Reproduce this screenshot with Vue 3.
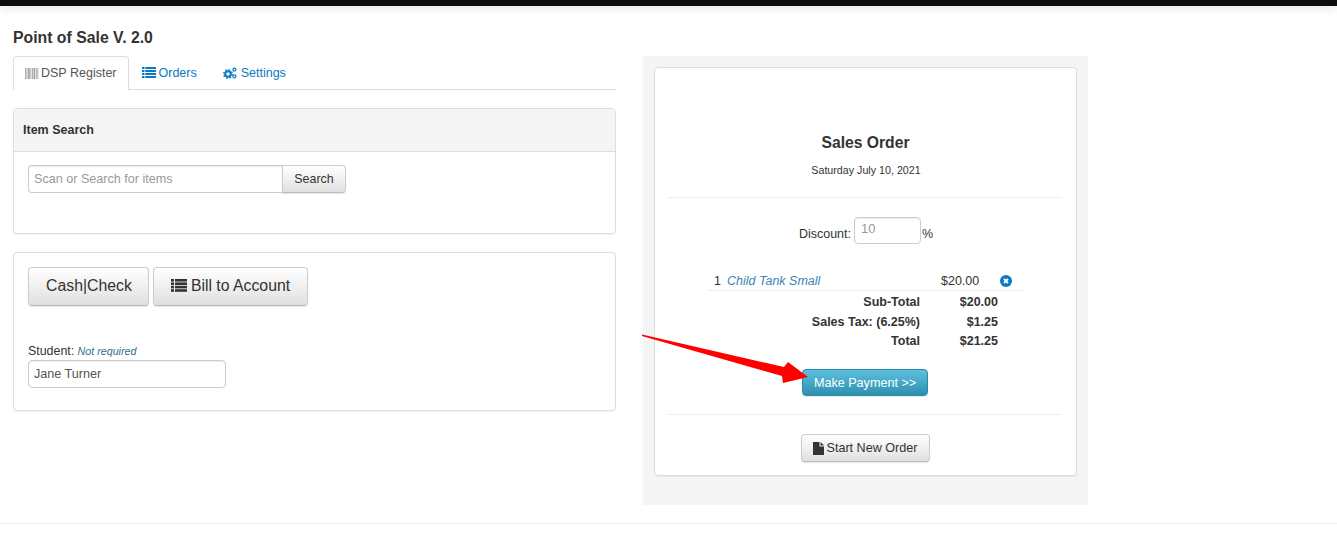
<script setup>
const tabs = [
  { label: 'DSP Register', icon: 'barcode', active: true },
  { label: 'Orders', icon: 'list', active: false },
  { label: 'Settings', icon: 'cogs', active: false }
]
const barcodeBars = [
  [0, 1], [2, 1], [4, 2], [7, 1], [9, 1], [11, 2], [14, 1], [16, 1]
]
const listRows = [1, 4, 7, 10]
</script>

<template>
  <div class="page">
    <div class="topbar"></div>
    <main class="content">
      <section class="left">
        <h1 class="title">Point of Sale V. 2.0</h1>
        <nav class="tabs">
          <a v-for="t in tabs" :key="t.label" class="tab" :class="[t.icon, { active: t.active }]">
            <svg v-if="t.icon === 'barcode'" class="ico-barcode" viewBox="0 0 14 11" width="14" height="11">
              <rect v-for="b in barcodeBars" :key="b[0]" :x="b[0] * 0.78" y="0" :width="b[1] * 0.78" height="11" fill="#999" />
            </svg>
            <svg v-else-if="t.icon === 'list'" class="ico" viewBox="0 0 14 12" width="14" height="12">
              <g v-for="y in listRows" :key="y" fill="#0a7ac2">
                <rect x="0" :y="y - 1" width="2.4" height="2" />
                <rect x="3.2" :y="y - 1" width="10.8" height="2" />
              </g>
            </svg>
            <svg v-else class="ico" viewBox="0 0 14 12" width="14" height="12">
              <circle cx="5" cy="7" r="2.8" fill="none" stroke="#0a7ac2" stroke-width="2" />
              <circle cx="5" cy="7" r="4.3" fill="none" stroke="#0a7ac2" stroke-width="1.4" stroke-dasharray="1.7 1.68" />
              <circle cx="11.4" cy="2.6" r="1.5" fill="none" stroke="#0a7ac2" stroke-width="1.2" />
              <circle cx="11.4" cy="9.4" r="1.5" fill="none" stroke="#0a7ac2" stroke-width="1.2" />
            </svg>
            {{ t.label }}
          </a>
        </nav>

        <div class="panel search-panel">
          <div class="panel-heading">Item Search</div>
          <div class="panel-body">
            <div class="input-group">
              <input class="field search-field" placeholder="Scan or Search for items" />
              <button class="btn search-btn">Search</button>
            </div>
          </div>
        </div>

        <div class="panel pay-panel">
          <div class="big-buttons">
            <button class="btn big cash">Cash|Check</button>
            <button class="btn big bill">
              <svg viewBox="0 0 16 13" width="16" height="13">
                <g v-for="y in [0, 3.4, 6.8, 10.2]" :key="y" fill="#333">
                  <rect x="0" :y="y" width="3" height="2.6" />
                  <rect x="4" :y="y" width="12" height="2.6" />
                </g>
              </svg>
              Bill to Account
            </button>
          </div>
          <div class="student">
            <label class="student-label">Student: <em>Not required</em></label>
            <input class="field student-field" value="Jane Turner" />
          </div>
        </div>
      </section>

      <aside class="well">
        <div class="card">
          <h2 class="order-title">Sales Order</h2>
          <p class="order-date">Saturday July 10, 2021</p>
          <hr class="rule first-rule" />
          <div class="discount">
            <span class="discount-text">Discount:</span>
            <input class="field discount-field" placeholder="10" />
            <span class="discount-text">%</span>
          </div>
          <div class="lines">
            <div class="line-item">
              <span class="qty">1</span>
              <a class="item-name">Child Tank Small</a>
              <span class="price">$20.00</span>
              <svg class="remove" viewBox="0 0 12 12" width="12" height="12">
                <circle cx="6" cy="6" r="6" fill="#0a7ac2" />
                <path d="M4 4l4 4M8 4l-4 4" stroke="#fff" stroke-width="1.8" />
              </svg>
            </div>
            <div class="total-row"><span>Sub-Total</span><span>$20.00</span></div>
            <div class="total-row"><span>Sales Tax: (6.25%)</span><span>$1.25</span></div>
            <div class="total-row"><span>Total</span><span>$21.25</span></div>
          </div>
          <div class="center pay-wrap">
            <button class="btn info">Make Payment &gt;&gt;</button>
          </div>
          <hr class="rule" />
          <div class="center new-wrap">
            <button class="btn new-order">
              <svg viewBox="0 0 11 13" width="11" height="13">
                <path d="M0 0h6.5v4.5H11V13H0zM7.6 0L11 3.4H7.6z" fill="#333" />
              </svg>
              Start New Order
            </button>
          </div>
        </div>
      </aside>
    </main>
    <footer class="footer-line"></footer>
    <svg class="arrow" viewBox="0 0 180 60" width="180" height="60">
      <path d="M1 0.5 L143 33 L147 28 L167 43 L142 49 L141 42 L1 2 Z" fill="#ff0000" />
    </svg>
  </div>
</template>

<style>
html, body { margin: 0; background: #fff; }
</style>

<style scoped>
.page {
  position: relative;
  width: 1337px;
  height: 537px;
  overflow: hidden;
  font-family: "Liberation Sans", Arial, sans-serif;
  font-size: 14px;
  line-height: 20px;
  color: #333;
}
.topbar {
  height: 6px;
  background: #0d0d0d;
  box-shadow: 0 2px 8px rgba(0, 0, 0, 0.12);
}
.content {
  display: flex;
  align-items: flex-start;
  gap: 27px;
  padding: 0 13px;
}
.left { width: 603px; }
.title {
  margin: 21px 0 8px;
  font-size: 15.8px;
  line-height: 21px;
  font-weight: 700;
}
.tabs {
  display: flex;
  height: 33px;
  box-sizing: content-box;
  border-bottom: 1px solid #ddd;
  margin-bottom: 18px;
  font-size: 12.5px;
}
.tab {
  display: flex;
  align-items: center;
  gap: 3px;
  box-sizing: border-box;
  height: 33px;
  padding: 0 12px;
  color: #0a7ac2;
  border: 1px solid transparent;
  border-bottom: 0;
  border-radius: 4px 4px 0 0;
}
.tab.active {
  height: 34px;
  gap: 2px;
  color: #555;
  background: #fff;
  border-color: #ddd;
  margin-bottom: -1px;
  padding: 0 11px 1px;
}
.tab.cogs { gap: 4px; }
.panel {
  background: #fff;
  border: 1px solid #ddd;
  border-radius: 4px;
  box-shadow: 0 1px 1px rgba(0, 0, 0, 0.05);
}
.search-panel { height: 124px; margin-bottom: 18px; }
.panel-heading {
  height: 42px;
  line-height: 42px;
  padding: 0 9px;
  font-size: 12.5px;
  font-weight: 700;
  background: #f5f5f5;
  border-bottom: 1px solid #ddd;
  border-radius: 3px 3px 0 0;
}
.panel-body { padding: 13px 14px; }
.input-group { display: flex; }
.field {
  box-sizing: border-box;
  font-family: inherit;
  font-size: 12.6px;
  color: #555;
  background: #fff;
  border: 1px solid #ccc;
  border-radius: 4px;
  padding: 0 5px;
  outline: none;
  box-shadow: inset 0 1px 1px rgba(0, 0, 0, 0.075);
}
.field::placeholder { color: #999; opacity: 1; }
.search-field {
  width: 254px;
  height: 28px;
  border-radius: 4px 0 0 4px;
  border-right: 0;
}
.btn {
  font-family: inherit;
  color: #333;
  background: linear-gradient(to bottom, #fff, #e0e0e0);
  border: 1px solid #ccc;
  border-bottom-color: #bbb;
  border-radius: 4px;
  box-shadow: 0 1px 1px rgba(0, 0, 0, 0.1);
  padding: 0;
}
.search-btn {
  width: 64px;
  height: 28px;
  font-size: 12.4px;
  border-radius: 0 4px 4px 0;
}
.pay-panel {
  box-sizing: border-box;
  height: 159px;
  padding: 14px 14px 0;
}
.big-buttons { display: flex; gap: 4px; }
.big {
  height: 39px;
  font-size: 15.8px;
  padding-bottom: 2px;
}
.cash { width: 121px; padding-left: 1px; }
.bill {
  width: 155px;
  display: flex;
  align-items: center;
  justify-content: center;
  gap: 4px;
}
.student { margin-top: 37px; }
.student-label {
  display: block;
  font-size: 12.4px;
  line-height: 17px;
}
.student-label em {
  font-size: 10.7px;
  color: #31708f;
}
.student-field {
  display: block;
  width: 198px;
  height: 28px;
}
.well {
  width: 445px;
  height: 449px;
  margin-top: 50px;
  padding: 11px;
  box-sizing: border-box;
  background: #f5f5f5;
}
.card {
  box-sizing: border-box;
  height: 409px;
  padding: 64px 14px 0 13px;
  background: #fff;
  border: 1px solid #ddd;
  border-radius: 4px;
  box-shadow: 0 1px 1px rgba(0, 0, 0, 0.05);
  text-align: center;
}
.order-title {
  margin: 0;
  padding-left: 1px;
  font-size: 15.7px;
  line-height: 21px;
  font-weight: 700;
}
.order-date {
  margin: 7px 0 0;
  padding-left: 2px;
  font-size: 10.7px;
  line-height: 20px;
}
.rule {
  margin: 0;
  border: 0;
  border-top: 1px solid #eee;
}
.first-rule { margin-top: 17px; }
.discount {
  display: flex;
  justify-content: center;
  align-items: center;
  margin-top: 19px;
  padding-left: 2px;
  height: 27px;
  font-size: 12.5px;
}
.discount-text { padding-top: 6px; }
.discount-field {
  width: 67px;
  height: 27px;
  margin: 0 1px 0 3px;
  padding: 0 6px 4px;
  font-size: 13px;
}
.lines {
  margin-top: 25px;
  margin-left: 40px;
  width: 315px;
  font-size: 12.5px;
}
.line-item {
  display: grid;
  grid-template-columns: 13px 214px 38px 33px;
  align-items: center;
  height: 22px;
  padding-top: 2px;
  padding-left: 6px;
  box-sizing: border-box;
  border-bottom: 1px solid #eee;
  text-align: left;
}
.item-name { font-style: italic; color: #3d83b3; }
.remove { justify-self: end; }
.total-row {
  display: flex;
  justify-content: flex-end;
  height: 20px;
  line-height: 20px;
  font-weight: 700;
  padding-right: 25px;
}
.line-item + .total-row { margin-top: 1px; }
.total-row:last-child { height: 19px; line-height: 18px; }
.total-row span:last-child { width: 78px; text-align: right; }
.center { display: flex; justify-content: center; }
.pay-wrap { margin-top: 18px; margin-bottom: 18px; }
.info {
  width: 126px;
  height: 27px;
  font-size: 12.6px;
  color: #fff;
  background: linear-gradient(to bottom, #5bc0de, #2f8fae);
  border-color: #2b8aa8;
}
.new-wrap { margin-top: 19px; }
.new-order {
  display: flex;
  align-items: center;
  justify-content: center;
  gap: 3px;
  width: 129px;
  height: 28px;
  font-size: 12.6px;
}
.footer-line {
  margin-top: 18px;
  border-top: 1px solid #eee;
}
.arrow {
  position: absolute;
  left: 641px;
  top: 334px;
  filter: blur(0.4px);
}
</style>
